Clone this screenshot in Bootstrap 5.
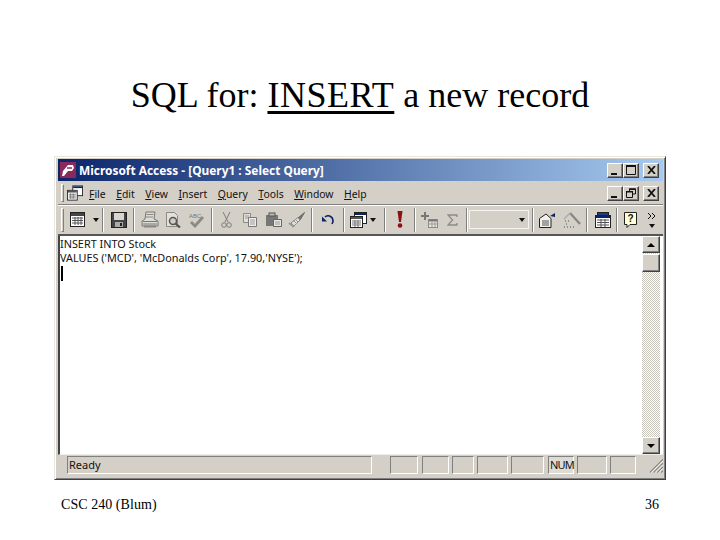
<!DOCTYPE html>
<html lang="en"><head><meta charset="utf-8"><title>SQL for: INSERT a new record</title>
<link href="https://cdn.jsdelivr.net/npm/bootstrap@5.3.0/dist/css/bootstrap.min.css" rel="stylesheet">
<style>
html,body{margin:0;background:#fff;color:#000}
.slide-page{width:720px;height:540px;overflow:hidden}
.slide-title{height:156px;padding-top:70px;margin:0;font:36px/50px "Liberation Serif",serif;text-align:center}
.slide-title u{text-decoration-thickness:3px;text-underline-offset:4px;letter-spacing:.5px}
.win-frame{width:612px;height:324px;margin-left:54px;background:#d4d0c8;border:1px solid;border-color:#e8e6e1 #404040 #404040 #e8e6e1;padding:2px 2px 1px 3px;box-shadow:inset 1px 1px 0 #fff,inset -1px -1px 0 #808080;font-family:"Noto Sans","Liberation Sans",sans-serif;font-size:10.4px;color:#111}
.win-title{height:22px;background:linear-gradient(90deg,#0a246a,#a6caf0);color:#fff;font-weight:700;font-size:11.9px;padding:0 4px 0 2px}
.win-title .tt-name{margin-left:3px;padding-top:2px}
.cap-btn{width:16px;height:15px;background:#d4d0c8;border:1px solid;border-color:#fff #404040 #404040 #fff;box-shadow:inset -1px -1px 0 #808080;flex:none}
.cap-far{margin-left:4px}
.menu-strip{height:23px;padding:0 4px 0 3px;border-bottom:1px solid #808080;box-shadow:0 1px 0 #fff;margin-top:1px}
.grip{width:3px;height:18px;border:1px solid;border-color:#fff #808080 #808080 #fff;flex:none}
.menu-icon{margin:0 6px 0 3px}
.menu-word{margin-right:10.5px;padding-top:3px}
.tool-strip{height:31px;padding:0 2px 0 3px;border-bottom:2px solid #555}
.tool-strip .grip{height:24px;margin-right:2px}
.tb-btn{width:23.4px;height:24px;flex:none}
.tb-wide{width:33px;height:24px;flex:none}
.tb-wide .drop-arrow{margin-left:-1px}
.tb-nudge{padding-left:2px}
.tb-sep{width:8px;height:24px;flex:none}
.tb-sep::after{content:"";display:block;width:2px;height:24px;margin:0 auto;border-left:1px solid #808080;border-right:1px solid #fff}
.sep-slim{width:6px}
.sep-thin{width:4px}
.tb-combo{width:60px;height:19px;border:1px solid #f4f3f0;flex:none;padding-right:3px}
.drop-arrow{width:0;height:0;border:3.5px solid transparent;border-top:4px solid #111;border-bottom:0}
.edit-zone{flex:1 1 0;min-height:0;background:#fff;border-left:2px solid #444;border-bottom:1px solid #efeeea}
.edit-copy{flex:1 1 0;padding:1px 0 0 0;line-height:14px;font-size:10.85px;white-space:pre;color:#111}
.caret-bar{display:block;width:2px;height:15px;background:#000;margin:1px 0 0 1px}
.vscroll{width:18px;flex:none;background:repeating-conic-gradient(#fff 0 25%,#c8c5bd 0 50%) 0 0/2px 2px;margin-right:3px}
.sb-btn{height:17px;background:#d4d0c8;border:1px solid;border-color:#fff #404040 #404040 #fff;box-shadow:inset -1px -1px 0 #808080}
.sb-thumb{height:18px;margin-top:1px;background:#d4d0c8;border:1px solid;border-color:#fff #404040 #404040 #fff;box-shadow:inset -1px -1px 0 #808080}
.sb-up{width:0;height:0;border:4px solid transparent;border-bottom:4px solid #000;border-top:0}
.sb-down{width:0;height:0;border:4px solid transparent;border-top:4px solid #000;border-bottom:0}
.status-strip{height:23px;padding:0 0 3px 9px}
.st-cell{height:18px;border:1px solid;border-color:#808080 #fff #fff #808080;flex:none;padding-left:1px;line-height:15px;font-size:11px}
.st-num{letter-spacing:-.8px;padding-left:1px;background:#dedbd4}
.st-ready{width:305px;margin-right:18px}
.c28{width:28px;margin-right:4px}.c27{width:27px;margin-right:3px}.c22{width:22px;margin-right:3px}.c31{width:31px;margin-right:3px}.c32{width:33px;margin-right:4px}.c26{width:26px;margin-right:3px}.c30{width:30px;margin-right:3px}
.c-end{width:26px;margin-right:13px}
.slide-foot{padding:15px 61px 0;font:14px/20px "Liberation Serif",serif;letter-spacing:.05px}
</style></head><body>
<div class="slide-page d-flex flex-column">
<h1 class="slide-title">SQL for: <u>INSERT</u> a new record</h1>
<div class="win-frame d-flex flex-column">
  <div class="win-title d-flex align-items-center">
    <svg width="16" height="16" viewBox="0 0 16 16"><rect width="16" height="16" fill="#8a2a5a"/><path d="M2 14 3 9 8 3h5l1 3-2 3H8l-4 5z" fill="#fff"/><path d="M7 6h5" stroke="#8a2a5a" stroke-width="1.500"/></svg>
    <span class="tt-name flex-grow-1">Microsoft Access - [Query1 : Select Query]</span>
    <span class="cap-btn d-flex align-items-end justify-content-center"><svg width="8" height="5" viewBox="0 0 8 5"><rect y="1" width="6" height="2" fill="#111"/></svg></span>
    <span class="cap-btn d-flex align-items-center justify-content-center"><svg width="10" height="10" viewBox="0 0 10 10"><path d="M.5 1.500h9v8h-9z" fill="none" stroke="#111"/><path d="M0 1h10" stroke="#111" stroke-width="2"/></svg></span>
    <span class="cap-btn cap-far d-flex align-items-center justify-content-center"><svg width="9" height="8" viewBox="0 0 9 8"><path d="M1 0l7 8M8 0 1 8" stroke="#111" stroke-width="1.800"/></svg></span>
  </div>
  <div class="menu-strip d-flex align-items-center">
    <span class="grip"></span>
    <svg class="menu-icon" width="16" height="16" viewBox="0 0 18 17"><rect x="6.500" y=".5" width="11" height="11" fill="#fff" stroke="#222"/><rect x="7" y="1" width="10" height="2" fill="#0a246a"/><rect x=".5" y="5.500" width="11" height="11" fill="#fff" stroke="#222"/><rect x="1" y="6" width="10" height="2" fill="#555"/><path d="M2 10h8M2 12h8M2 14h8M4 9v6M7 9v6" stroke="#777"/></svg>
    <span class="menu-word"><u>F</u>ile</span><span class="menu-word"><u>E</u>dit</span><span class="menu-word"><u>V</u>iew</span><span class="menu-word"><u>I</u>nsert</span><span class="menu-word"><u>Q</u>uery</span><span class="menu-word"><u>T</u>ools</span><span class="menu-word"><u>W</u>indow</span><span class="menu-word flex-grow-1"><u>H</u>elp</span>
    <span class="cap-btn d-flex align-items-end justify-content-center"><svg width="8" height="5" viewBox="0 0 8 5"><rect y="1" width="6" height="2" fill="#111"/></svg></span>
    <span class="cap-btn d-flex align-items-center justify-content-center"><svg width="10" height="10" viewBox="0 0 10 10"><path d="M3.500 3V1h6v5H7M.5 3.500h6v6h-6z" fill="none" stroke="#111"/><path d="M3 1.200h7M0 3.800h7" stroke="#111" stroke-width="1.500"/></svg></span>
    <span class="cap-btn cap-far d-flex align-items-center justify-content-center"><svg width="9" height="8" viewBox="0 0 9 8"><path d="M1 0l7 8M8 0 1 8" stroke="#111" stroke-width="1.800"/></svg></span>
  </div>
  <div class="tool-strip d-flex align-items-center">
    <span class="grip"></span>
    <span class="tb-wide d-flex align-items-center ps-1 gap-2"><svg width="16" height="16" viewBox="0 0 16 16"><rect x=".5" y=".5" width="14" height="14" fill="#fff" stroke="#222"/><rect x="1" y="1" width="13" height="3" fill="#444"/><path d="M2 6h11M2 8.500h11M2 11h11M5 5v8M8 5v8M11 5v8" stroke="#555"/></svg><span class="drop-arrow"></span></span>
    <span class="tb-sep"></span>
    <span class="tb-btn d-flex align-items-center justify-content-center"><svg width="16" height="16" viewBox="0 0 16 16"><rect x=".5" y=".5" width="15" height="15" fill="#444" stroke="#222"/><rect x="3" y="1" width="10" height="7" fill="#d9d6cf"/><rect x="4" y="10" width="8" height="5" fill="#aaa"/><rect x="9" y="11" width="2" height="3" fill="#222"/></svg></span>
    <span class="tb-sep"></span>
    <span class="tb-btn d-flex align-items-center justify-content-center"><svg width="18" height="17" viewBox="0 0 18 17"><path d="M5 1h9l-1 7 4 2v5H1v-5l3-2z" fill="#dedcd6" stroke="#777"/><path d="M5.500 3.500h7M5 6h7" stroke="#8a8a86"/><path d="M2 10.500h14M2 13h14" stroke="#777"/><path d="M3 15.500h12" stroke="#888" stroke-width="2"/></svg></span>
    <span class="tb-btn d-flex align-items-center justify-content-center"><svg width="16" height="16" viewBox="0 0 16 16"><path d="M1.500.5h8l3 3v11h-11z" fill="#e2e0da" stroke="#8a8a86"/><circle cx="8" cy="9" r="3.500" fill="#cfcdc6" stroke="#555" stroke-width="1.500"/><path d="M10.500 11.500 15 15.500" stroke="#555" stroke-width="2.200"/></svg></span>
    <span class="tb-btn d-flex align-items-center justify-content-center"><svg width="17" height="16" viewBox="0 0 17 16"><text x="1" y="6" font-size="6" font-family="Liberation Sans" fill="#777">ABC</text><path d="M3 10l4 4 8-9" fill="none" stroke="#8a8a86" stroke-width="2.800"/></svg></span>
    <span class="tb-sep sep-slim"></span>
    <span class="tb-btn d-flex align-items-center justify-content-center"><svg width="11" height="16" viewBox="0 0 11 16"><path d="M2 0l5 10M9 0 4 10" stroke="#7c7c78"/><circle cx="3" cy="13" r="2.300" fill="none" stroke="#7c7c78"/><circle cx="8" cy="13" r="2.300" fill="none" stroke="#7c7c78"/></svg></span>
    <span class="tb-btn d-flex align-items-center justify-content-center"><svg width="14" height="14" viewBox="0 0 14 14"><path d="M.5.500h7v9h-7z" fill="#e2e0da" stroke="#8a8a86"/><path d="M2 3h4M2 5h4" stroke="#999"/><path d="M5.500 4.500h8v9h-8z" fill="#efeeea" stroke="#777"/><path d="M7 7h5M7 9h5M7 11h5" stroke="#999"/></svg></span>
    <span class="tb-btn d-flex align-items-center justify-content-center"><svg width="17" height="15" viewBox="0 0 17 15"><path d="M1 3h12v11H1z" fill="#777"/><rect x="4" y="1" width="6" height="3" fill="#bbb" stroke="#555"/><path d="M8.500 7.500h8v7h-8z" fill="#e8e6e1" stroke="#666"/><path d="M10 10h5M10 12h5" stroke="#999"/></svg></span>
    <span class="tb-btn d-flex align-items-center justify-content-center"><svg width="17" height="16" viewBox="0 0 17 16"><path d="M16.500 .5 10 6l2 2z" fill="#777" stroke="#666"/><path d="M10 5.500 3 11l3 3 6-6z" fill="#e2e0da" stroke="#8a8a86"/><path d="M5 8l4 4M7 7l3 3" stroke="#999"/><path d="M1 11l5 4" stroke="#999" stroke-width="2"/></svg></span>
    <span class="tb-sep"></span>
    <span class="tb-btn d-flex align-items-center justify-content-center"><svg width="12" height="10" viewBox="0 0 12 10"><path d="M3 2C6-.5 11 1 11 6c0 1-.5 2-1 3" fill="none" stroke="#0a246a" stroke-width="1.600"/><path d="M0 1.500v5h5z" fill="#0a246a"/></svg></span>
    <span class="tb-sep"></span>
    <span class="tb-wide tb-nudge d-flex align-items-center gap-1"><svg width="17" height="16" viewBox="0 0 17 16"><rect x="4.500" y=".5" width="12" height="11" fill="#fff" stroke="#222"/><rect x="5" y="1" width="11" height="2" fill="#0a246a"/><rect x=".5" y="4.500" width="12" height="11" fill="#fff" stroke="#222"/><rect x="1" y="5" width="11" height="2" fill="#555"/><path d="M2 9h9M2 11h9M2 13h9M5 8v7M8 8v7" stroke="#777"/></svg><span class="drop-arrow"></span></span>
    <span class="tb-sep"></span>
    <span class="tb-btn d-flex align-items-center justify-content-center"><svg width="6" height="17" viewBox="0 0 6 17"><path d="M.5 0h5L4 11H2z" fill="#8b1010"/><circle cx="3" cy="14.500" r="2.300" fill="#8b1010"/></svg></span>
    <span class="tb-sep sep-slim"></span>
    <span class="tb-btn d-flex align-items-center justify-content-center"><svg width="17" height="16" viewBox="0 0 17 16"><path d="M3 0h2v3h3v2H5v3H3V5H0V3h3z" fill="#777"/><rect x="7.500" y="7.500" width="9" height="8" fill="#e6e4de" stroke="#8a8a86"/><path d="M8 8.500h8" stroke="#777" stroke-width="2"/><path d="M8 12h8M11 10v5M14 10v5" stroke="#999"/></svg></span>
    <span class="tb-btn d-flex align-items-center justify-content-center"><svg width="11" height="12" viewBox="0 0 11 12"><path d="M10 3V1H1l4.500 5L1 11h9V9" fill="none" stroke="#8a8a86" stroke-width="1.300"/></svg></span>
    <span class="tb-sep sep-thin"></span>
    <span class="tb-combo d-flex align-items-center justify-content-end"><span class="drop-arrow"></span></span>
    <span class="tb-sep"></span>
    <span class="tb-btn d-flex align-items-center justify-content-center"><svg width="18" height="16" viewBox="0 0 18 16"><path d="M.5 6.500 7 2l5 4.500v9H.5z" fill="#f2f1ee" stroke="#222"/><path d="M3 9h7M3 11h7M3 13h7" stroke="#555"/><path d="M11 4l5-3v4z" fill="#0a246a"/></svg></span>
    <span class="tb-btn d-flex align-items-center justify-content-center"><svg width="18" height="16" viewBox="0 0 18 16"><path d="M7 1l10 11" stroke="#888" stroke-width="2.400"/><path d="M7 1 1 7" stroke="#aaa" stroke-width="1.500"/><path d="M2 9h1M5 9h1M3 12h1M1 15h1M4 15h1M7 15h1M10 15h1" stroke="#777" stroke-width="1.500"/></svg></span>
    <span class="tb-sep"></span>
    <span class="tb-btn d-flex align-items-center justify-content-center"><svg width="16" height="16" viewBox="0 0 16 16"><rect x="2.500" y=".5" width="11" height="5" fill="#1f3a8a" stroke="#222"/><rect x=".5" y="3.500" width="15" height="12" fill="#fff" stroke="#222"/><rect x="1" y="4" width="14" height="2" fill="#0a246a"/><path d="M2 8h12M2 10.500h12M2 13h12M6 7v8M10 7v8" stroke="#555"/></svg></span>
    <span class="tb-sep sep-thin"></span>
    <span class="tb-btn d-flex align-items-center justify-content-center"><svg width="13" height="16" viewBox="0 0 13 16"><path d="M.5.500h12v12H6l-3 3v-3H.5z" fill="#ffffd8" stroke="#222"/><text x="6.500" y="10" font-size="10" font-weight="700" text-anchor="middle" font-family="Liberation Sans" fill="#111">?</text></svg></span>
    <span class="flex-grow-1 d-flex flex-column align-items-center"><svg width="9" height="8" viewBox="0 0 9 8"><path d="M1 1l3 3-3 3M5 1l3 3-3 3" fill="none" stroke="#111"/></svg><span class="drop-arrow mt-1"></span></span>
  </div>
  <div class="edit-zone d-flex">
    <div class="edit-copy">INSERT INTO Stock
VALUES ('MCD', 'McDonalds Corp', 17.90,'NYSE');
<span class="caret-bar"></span></div>
    <div class="vscroll d-flex flex-column">
      <span class="sb-btn d-flex align-items-center justify-content-center"><span class="sb-up"></span></span>
      <span class="sb-thumb"></span>
      <span class="flex-grow-1"></span>
      <span class="sb-btn d-flex align-items-center justify-content-center"><span class="sb-down"></span></span>
    </div>
  </div>
  <div class="status-strip d-flex align-items-center">
    <span class="st-cell st-ready">Ready</span>
    <span class="st-cell c28"></span><span class="st-cell c27"></span><span class="st-cell c22"></span><span class="st-cell c31"></span><span class="st-cell c32"></span><span class="st-cell c26 st-num">NUM</span><span class="st-cell c30"></span><span class="st-cell c-end"></span>
    <svg width="15" height="15" viewBox="0 0 15 15"><path d="M1 15 15 1M5 15 15 5M9 15l6-6M13 15l2-2" stroke="#808080" stroke-width="1.200"/><path d="M2.500 15 15 2.500M6.500 15 15 6.500M10.500 15 15 10.500" stroke="#fff"/></svg>
  </div>
</div>
<div class="slide-foot d-flex justify-content-between"><span>CSC 240 (Blum)</span><span>36</span></div>
</div>
</body></html>
